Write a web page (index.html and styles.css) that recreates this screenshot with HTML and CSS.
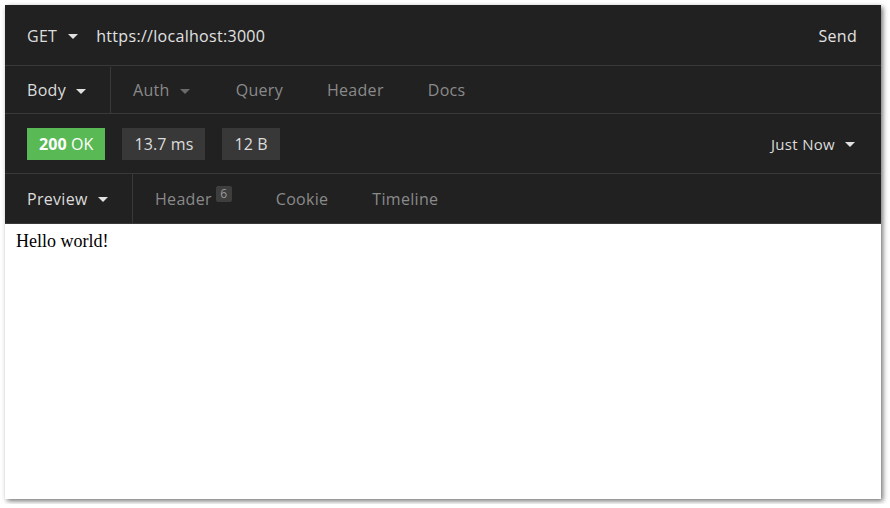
FILE: index.html
```html
<!DOCTYPE html>
<html>
<head>
<meta charset="utf-8">
<link rel="stylesheet" href="styles.css">
</head>
<body>
<div class="window">
  <div class="row urlbar">
    <div class="method">GET <span class="caret"></span></div>
    <div class="url">https://localhost:3000</div>
    <div class="send">Send</div>
  </div>
  <div class="row tabs reqtabs">
    <div class="tab first active">Body <span class="caret"></span></div>
    <div class="tab">Auth <span class="caret dim"></span></div>
    <div class="tab">Query</div>
    <div class="tab">Header</div>
    <div class="tab">Docs</div>
  </div>
  <div class="row status">
    <div class="tag ok"><b>200</b> OK</div>
    <div class="tag">13.7 ms</div>
    <div class="tag">12 B</div>
    <div class="spacer"></div>
    <div class="when">Just Now <span class="caret"></span></div>
  </div>
  <div class="row tabs restabs">
    <div class="tab first active">Preview <span class="caret"></span></div>
    <div class="tab">Header <span class="count">6</span></div>
    <div class="tab">Cookie</div>
    <div class="tab">Timeline</div>
  </div>
  <div class="preview">Hello world!</div>
</div>
</body>
</html>
```

FILE: styles.css
```css
html, body {
  margin: 0;
  padding: 0;
  background: #ffffff;
}
body {
  padding: 5px;
}
.window {
  width: 876px;
  height: 494px;
  background: #212121;
  box-shadow: 2px 2px 5px rgba(0, 0, 0, 0.55);
  display: flex;
  flex-direction: column;
  font-family: "Open Sans", "Noto Sans", sans-serif;
  font-size: 16px;
  letter-spacing: 0.3px;
  color: #dcdcdc;
  overflow: hidden;
}
.row {
  display: flex;
  align-items: center;
  border-bottom: 1px solid #393939;
  box-sizing: border-box;
}
.urlbar {
  height: 61px;
  padding: 0 24px 0 22px;
  padding-top: 1px;
}
.method {
  display: flex;
  align-items: center;
  gap: 11px;
  margin-right: 18px;
}
.url {
  flex: 1;
  color: #e2e2e2;
}
.send {
  color: #e2e2e2;
}
.caret {
  display: inline-block;
  width: 0;
  height: 0;
  border-left: 5px solid transparent;
  border-right: 5px solid transparent;
  border-top: 5px solid #e0e0e0;
  margin-top: 2px;
}
.caret.dim {
  border-top-color: #6a6a6a;
}
.tabs {
  align-items: stretch;
}
.reqtabs {
  height: 48px;
  padding-top: 1px;
}
.restabs {
  height: 50px;
}
.tab {
  display: flex;
  align-items: center;
  gap: 10px;
  padding: 0 22px;
  color: #8a8a8a;
}
.tab.active {
  color: #dcdcdc;
}
.tab.first {
  padding-left: 22px;
  border-right: 1px solid #393939;
  box-sizing: border-box;
}
.reqtabs .tab.first {
  width: 106px;
}
.reqtabs .tab:nth-child(3) {
  padding-left: 24px;
}
.restabs .tab.first {
  width: 128px;
}
.restabs .tab:nth-child(2) {
  gap: 4px;
}
.count {
  display: inline-block;
  background: #3e3e3e;
  color: #9a9a9a;
  font-size: 12px;
  letter-spacing: 0;
  line-height: 16px;
  width: 16px;
  height: 16px;
  text-align: center;
  border-radius: 2px;
  align-self: center;
  margin-top: -10px;
}
.status {
  height: 60px;
  padding: 0 26px 0 22px;
  gap: 17px;
}
.tag {
  background: #383838;
  color: #dcdcdc;
  height: 32px;
  line-height: 32px;
  padding: 0 12px;
  letter-spacing: 0.1px;
}
.tag.ok {
  background: #59b955;
  color: #ffffff;
}
.tag b {
  font-weight: 700;
}
.spacer {
  flex: 1;
}
.when {
  display: flex;
  align-items: center;
  gap: 10px;
  font-size: 15px;
}
.preview {
  flex: 1;
  background: #ffffff;
  color: #000000;
  font-family: "Liberation Serif", serif;
  font-size: 18px;
  letter-spacing: 0;
  padding: 7px 11px;
}
```
